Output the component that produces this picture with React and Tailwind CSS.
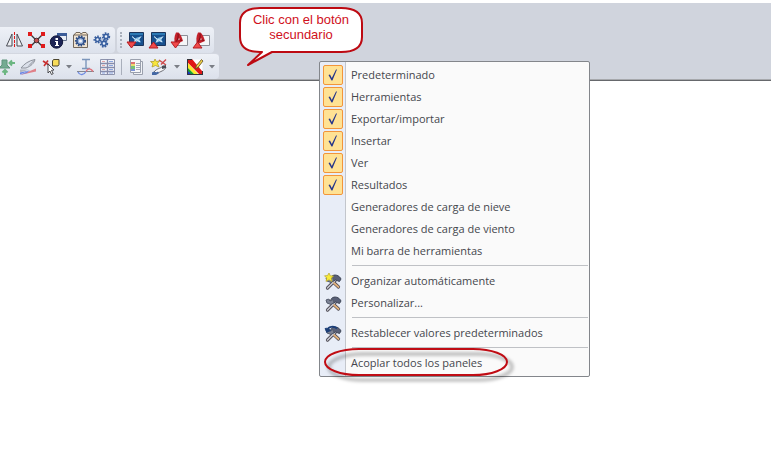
/**
 * Toolbar area with its context menu
 * Lists the toolbars that can be shown or hidden
 */

import { useState } from 'react';

const TOOLBARS = [
  { name: 'Predeterminado', visible: true },
  { name: 'Herramientas', visible: true },
  { name: 'Exportar/importar', visible: true },
  { name: 'Insertar', visible: true },
  { name: 'Ver', visible: true },
  { name: 'Resultados', visible: true },
  { name: 'Generadores de carga de nieve', visible: false },
  { name: 'Generadores de carga de viento', visible: false },
  { name: 'Mi barra de herramientas', visible: false },
];

function Icon({ children }) {
  return (
    <svg className="w-5 h-5 shrink-0" viewBox="0 0 20 20" fill="none" aria-hidden="true">
      {children}
    </svg>
  );
}

function MirrorIcon() {
  return (
    <Icon>
      <path d="M8 4v12H2.500z" fill="#eef0f4" stroke="#4a4d55" />
      <path d="M13 4v12h5.500z" fill="#eef0f4" stroke="#4a4d55" />
      <path d="M10.500 2v16" stroke="#e01818" strokeDasharray="3 1" />
    </Icon>
  );
}

function NodeIcon() {
  return (
    <Icon>
      <path d="M4 4l13 13M17 4L4 17" stroke="#3a3638" strokeWidth="1.400" />
      <circle cx="10.500" cy="10.500" r="2.300" fill="#c05050" stroke="#4a3033" />
      <path d="M2 2h4v4H2zM15 2h4v4h-4zM2 14h4v4H2zM15 14h4v4h-4z" fill="#e01b1b" />
    </Icon>
  );
}

function InfoIcon() {
  return (
    <Icon>
      <path d="M9.500 3.500h9v7h-9z" fill="#e9edf5" stroke="#66738c" />
      <path d="M9 3h10v3H9z" fill="#3c5c98" />
      <circle cx="8.500" cy="12" r="6.200" fill="#1c2456" stroke="#12183c" />
      <path d="M7.500 8h2.500v2H7.500zM7 11h3v4h1v1H7v-1h1v-3H7z" fill="#fff" />
    </Icon>
  );
}

function Gear({ x, y, r, color }) {
  return (
    <g>
      <circle cx={x} cy={y} r={r} stroke={color} strokeWidth="2" strokeDasharray="1.500 1.200" />
      <circle cx={x} cy={y} r={r - 1} fill="#9db6de" stroke={color} strokeWidth="1.500" />
      <circle cx={x} cy={y} r={r / 3} fill="#f3f5fa" />
    </g>
  );
}

function PanelGearIcon() {
  return (
    <Icon>
      <path d="M4 5l2-2.500h4l1 1.500 2-1.500h3l2 2.500" fill="#f7e6cb" stroke="#72665a" />
      <path d="M3.500 5h14v12.500h-14z" fill="#efe3d2" stroke="#72665a" />
      <Gear x={10.5} y={11} r={4.6} color="#2c4c86" />
    </Icon>
  );
}

function GearsIcon() {
  return (
    <Icon>
      <Gear x={5.5} y={9.5} r={3} color="#395f9f" />
      <Gear x={14} y={6.5} r={3.2} color="#395f9f" />
      <Gear x={12} y={13.5} r={3.2} color="#395f9f" />
    </Icon>
  );
}

function TransferIcon({ page, up }) {
  return (
    <Icon>
      {page ? (
        <>
          <path d="M7.500 5.500h11v10h-11z" fill="#f5f6f8" stroke="#8c8f98" />
          <path d="M7 2.500h2.500c2 1.500 3.500 5 4.500 8.500l-8 3.500c-1-4-1-8 1-12z" fill="#c3202a" />
          <path d="M7 12c2-3 2.500-5 2-8.500M8 9l5 1.500" stroke="#7c0d16" />
          <path d="M10 8l1 1.500-2 .5z" fill="#f1c4c6" />
        </>
      ) : (
        <>
          <path d="M4.500 2.500h14v13h-14z" fill="#17508e" stroke="#1b355c" />
          <path d="M5 3h13v2H5z" fill="#2c79b4" />
          <path d="M7 6.500l3 2 2-1 4-1-1.500 3 1.500 3-3.500-1-4 1.500 1-3.500z" fill="#86bfe6" />
          <path d="M7 6.500l3.500 3M16 6.500l-3 3M9.500 12l2-2.500 3.500 2.500" stroke="#e4f1fa" />
        </>
      )}
      {up ? (
        <path d="M6.500 12l4.500 6H2z" fill="#f04a4a" stroke="#b51c22" />
      ) : (
        <path d="M2 12h9l-4.500 6z" fill="#f04a4a" stroke="#b51c22" />
      )}
    </Icon>
  );
}

function SupportIcon() {
  return (
    <Icon>
      <path d="M6 3h5v5l3 3H3l3-3z" fill="#74ab92" stroke="#5f947d" />
      <path d="M19 6h-5m2-2.500L13.500 6 16 8.500M9 18v-4m-2.500 1.500L9 13l2.500 2.500" stroke="#6cb682" strokeWidth="2" />
    </Icon>
  );
}

function DeformIcon() {
  return (
    <Icon>
      <path d="M3 11c3-4 8-7.500 14-8.500-1 4-4 6.500-9 8.500z" fill="#dbe0ea" stroke="#8d929c" />
      <path d="M11 8.500l5-5" stroke="#8d929c" />
      <path d="M2 12.500h9l-9 3z" fill="#b4b7bf" />
      <path d="M2 17.500v-2l9-2z" fill="#6a86e6" />
      <path d="M2 18l16-3.500v-3z" fill="#e08089" />
      <path d="M2 18l8-4 2-1-3 3z" fill="#7288e0" />
    </Icon>
  );
}

function SelectIcon() {
  return (
    <Icon>
      <path d="M2 4l6 4M7 3.500L3 9" stroke="#c92f2f" strokeWidth="1.600" />
      <path d="M11.500 4l1-1.500h5.500v5L17 9h-5.500z" fill="#f7dc5a" stroke="#4c4630" />
      <path d="M7 7l6 6-2.500.3 1.700 3.400-1.700.8-1.600-3.500L7 16z" fill="#fff" stroke="#3a3a3e" strokeWidth=".9" />
    </Icon>
  );
}

function BeamIcon() {
  return (
    <Icon>
      <path d="M7 2.500h8M11 3v8M7 11.500h8" stroke="#7c96bb" strokeWidth="1.400" />
      <path d="M2 14.500h17" stroke="#85878f" />
      <path d="M3 15c2 4 6 3 8-.5" stroke="#6f8ce2" strokeWidth="1.400" />
      <path d="M11 14.500c2-4 5-3 7 0" stroke="#e0727b" strokeWidth="1.400" />
    </Icon>
  );
}

function TableIcon() {
  return (
    <Icon>
      <path d="M3.500 2.500h14v15h-14z" fill="#f1f3f9" stroke="#8d93ac" />
      <path d="M3 6.500h15M3 10.500h15M3 14.500h15M10.500 2v16" stroke="#868cab" strokeWidth="1.300" />
      <path d="M5 4.500h3M5 8.500h3M5 12.500h3" stroke="#e2a5a7" />
      <path d="M12 4.500h4M12 8.500h4M12 12.500h4M5 16h3M12 16h4" stroke="#8ba5df" />
    </Icon>
  );
}

function LegendIcon() {
  return (
    <Icon>
      <path d="M7.500 4.500h9v13h-9z" fill="#f2f4f8" stroke="#9aa0ad" />
      <path d="M4.500 2.500h10v13h-10z" fill="#f7f8fa" stroke="#9aa0ad" />
      <path d="M5 5h4v2H5z" fill="#dc7272" />
      <path d="M5 7h4v2H5z" fill="#ead96f" />
      <path d="M5 9h4v3H5z" fill="#76c07a" />
      <path d="M5 12h4v2H5z" fill="#7c93d8" />
      <path d="M10 6.500h4M10 8.500h4M10 10.500h4M10 12.500h4" stroke="#a3abb9" />
    </Icon>
  );
}

function WandIcon() {
  return (
    <Icon>
      <path d="M10 3l7 5M17 2.500l-5 5" stroke="#cf4a4c" strokeWidth="1.400" />
      <path d="M5 15c3-4 6-3 9-6l3 1c-1 4-6 4-9 7z" fill="#f7f7f9" stroke="#6a6c73" />
      <path d="M3 15.500c2-2 4 1 6-1l1 1.500-3 2H3z" fill="#4468a4" />
      <path d="M13 9l4-1v3l-4 1z" fill="#4b4e57" />
      <path d="M6 2l1.300 2.500 3.200-.5-2 2.500L10 10 6.500 8.500 3 10l1-3.300L1.500 4.500H5z" fill="#f8e63c" stroke="#a89525" strokeWidth=".7" />
    </Icon>
  );
}

function ColorMapIcon() {
  return (
    <Icon>
      <path d="M3.500 2.500h15v15h-15z" fill="#fff" />
      <path d="M3 2h5l10 12v4h-2L3 5z" fill="#e01616" />
      <path d="M3 5l12 13h-4L3 10z" fill="#ffe72a" />
      <path d="M3 10l8 8H7l-4-4z" fill="#18a428" />
      <path d="M3 13l5 5H3z" fill="#1633cc" />
      <path d="M11.500 11.500l1-3 5-6 1.500 1.500-5 6.500z" fill="#f1d345" stroke="#5c4a25" strokeWidth=".8" />
      <path d="M3.500 2v15.500H19M3 2.500h5M18.500 14v4" stroke="#33343a" />
    </Icon>
  );
}

function ToolsIcon({ star, reset }) {
  return (
    <Icon>
      <path d="M4.500 17l8-8M7 8l8.500 8" stroke="#4a4650" strokeWidth="3.200" strokeLinecap="round" />
      <path d="M4.500 17l8-8" stroke="#c9cbd4" strokeWidth="1.600" strokeLinecap="round" />
      <path d="M11 12l4.500 4" stroke="#e1b27d" strokeWidth="1.800" strokeLinecap="round" />
      <path d="M8.500 5.500c3-3 8-1 9.500 2.500l-1.500 2.500-4-1.500-3 1.500z" fill="#596077" stroke="#414859" />
      <path d="M3 7l2.500-1L7 8l3-1.500 1 3-3 2-4-1.500z" fill="#7b8295" stroke="#555c6d" />
      {star && (
        <path d="M6 2l1.300 2.800 3.200.2-2.300 2.300.8 3.200L6 8.800 3 10.500l.7-3.500L1.500 4.800l3-.2z" fill="#f8ea38" stroke="#b4a530" strokeWidth=".7" />
      )}
      {reset && <path d="M4 7.500c1-4 7-5 10-2M2.500 5l1.500 3.500L7.500 7" stroke="#1c3f78" strokeWidth="2" />}
    </Icon>
  );
}

function ToolButton({ label, wide, children }) {
  return (
    <button
      type="button"
      aria-label={label}
      className={`${wide ? 'w-6' : 'w-[22px]'} h-6 shrink-0 flex items-center justify-center rounded-sm hover:bg-amber-100`}
    >
      {children}
    </button>
  );
}

function ArrowButton({ label }) {
  return (
    <button type="button" aria-label={label} className="w-[11px] h-6 shrink-0 flex items-center justify-center">
      <svg className="w-[6px] h-[4px]" viewBox="0 0 6 4" aria-hidden="true">
        <path d="M0 0h6L3 3.500z" fill="#7b7e86" />
      </svg>
    </button>
  );
}

function ToolbarArea() {
  return (
    <header className="mt-[3px] pt-6 bg-[#d0d4dd] border-b border-[#66686c]">
      {/* First row */}
      <div className="flex gap-[2px]">
        <div className="flex items-center h-[26px] pl-[3px] pr-[2px] rounded-r-sm bg-linear-to-b from-[#eef1f7] to-[#dce1eb]">
          <ToolButton label="Simetría"><MirrorIcon /></ToolButton>
          <ToolButton label="Nudos"><NodeIcon /></ToolButton>
          <ToolButton label="Información"><InfoIcon /></ToolButton>
          <ToolButton label="Configuración"><PanelGearIcon /></ToolButton>
          <ToolButton label="Opciones"><GearsIcon /></ToolButton>
        </div>
        <div className="flex items-center h-[26px] pl-[3px] pr-[2px] rounded-sm bg-linear-to-b from-[#eef1f7] to-[#dce1eb]">
          <span className="h-4 mr-[2px] border-l-2 border-dotted border-[#a9afbb]" />
          <ToolButton label="Exportar modelo"><TransferIcon /></ToolButton>
          <ToolButton label="Importar modelo"><TransferIcon up /></ToolButton>
          <ToolButton label="Exportar documento"><TransferIcon page /></ToolButton>
          <ToolButton label="Importar documento"><TransferIcon page up /></ToolButton>
        </div>
      </div>

      {/* Second row */}
      <div className="flex border-b border-[#a6a8ac]">
        <div className="flex items-center h-[26px] pr-[2px] rounded-r-sm border-t border-[#d3d7e0] bg-linear-to-b from-[#eef1f7] to-[#dce1eb]">
          <div className="-ml-[5px] flex items-center">
            <ToolButton label="Apoyos"><SupportIcon /></ToolButton>
            <ToolButton label="Deformada"><DeformIcon /></ToolButton>
            <ToolButton label="Seleccionar" wide><SelectIcon /></ToolButton>
            <ArrowButton label="Más opciones de selección" />
            <ToolButton label="Esfuerzos"><BeamIcon /></ToolButton>
            <ToolButton label="Tablas"><TableIcon /></ToolButton>
            <span className="h-4 mx-[3px] border-l border-[#a9afbb]" />
            <ToolButton label="Leyenda"><LegendIcon /></ToolButton>
            <ToolButton label="Asistente" wide><WandIcon /></ToolButton>
            <ArrowButton label="Más asistentes" />
            <ToolButton label="Mapa de colores" wide><ColorMapIcon /></ToolButton>
            <ArrowButton label="Más mapas de colores" />
          </div>
        </div>
      </div>
    </header>
  );
}

function Callout() {
  return (
    <div className="absolute left-[238px] top-[6px] w-[126px] h-[62px] pt-[6px] text-center font-['Liberation_Sans',sans-serif] text-[13px] leading-[15px] text-[#d0101c]">
      <svg className="absolute inset-0 w-full h-full" viewBox="0 0 126 62" aria-hidden="true">
        <path
          d="M22 2h81q21 0 21 15v14q0 15-21 15H34L10 59l14-13h-2Q2 46 2 31V17Q2 2 22 2z"
          fill="#fff"
          stroke="#bd0a12"
          strokeWidth="2"
          strokeLinejoin="round"
        />
      </svg>
      <p className="relative">Clic con el botón<br />secundario</p>
    </div>
  );
}

function ToolbarOption({ name, checked, onToggle }) {
  return (
    <li>
      <label className="flex items-center h-[22px] pl-[3px]">
        <span className="grid w-5 h-5 mr-2 place-items-center">
          <input
            type="checkbox"
            checked={checked}
            onChange={onToggle}
            className="peer col-start-1 row-start-1 w-5 h-5 appearance-none rounded-xs checked:border checked:border-[#f2953a] checked:bg-[#ffe294]"
          />
          <svg className="hidden peer-checked:block col-start-1 row-start-1 w-3 h-3 pointer-events-none" viewBox="0 0 12 12" aria-hidden="true">
            <path d="M1.500 6l1.500-.5 1.800 3.500L9 .5h1L5.400 11.500h-.9z" fill="#26368a" />
          </svg>
        </span>
        {name}
      </label>
    </li>
  );
}

function MenuAction({ icon, children }) {
  return (
    <li>
      <button type="button" className="w-full h-[22px] pl-[3px] flex items-center text-left">
        <span className="w-5 h-5 mr-2">{icon}</span>
        {children}
      </button>
    </li>
  );
}

function Separator() {
  return (
    <li role="separator" className="h-2 pt-[3px] pl-8 pr-px">
      <div className="border-t border-[#bfc1c5]" />
    </li>
  );
}

function Highlight() {
  return (
    <svg className="absolute left-[3px] bottom-[-9px] w-[194px] h-[38px] pointer-events-none" viewBox="0 0 194 38" fill="none" aria-hidden="true">
      <defs>
        <filter id="soft" x="-10%" y="-20%" width="120%" height="150%">
          <feGaussianBlur stdDeviation="1.500" />
        </filter>
      </defs>
      <rect x="6" y="7" width="183" height="26" rx="34" ry="13" stroke="#000" strokeOpacity=".22" strokeWidth="4" filter="url(#soft)" />
      <rect x="2" y="2" width="182" height="26" rx="34" ry="13" stroke="#c00c14" strokeWidth="2" />
    </svg>
  );
}

function ContextMenu() {
  const [toolbars, setToolbars] = useState(TOOLBARS);

  const handleToggle = (name) => {
    setToolbars(toolbars.map((bar) => (bar.name === name ? { ...bar, visible: !bar.visible } : bar)));
  };

  return (
    <div className="absolute left-[319px] top-[61px] w-[271px] py-[2px] rounded-xs border border-[#83868b] bg-[linear-gradient(to_right,#e8edf7_25px,#c3c6cc_25px,#c3c6cc_26px,#fafafa_26px)] font-['Open_Sans',sans-serif] text-[11px] text-[#45474d]">
      <ul>
        {toolbars.map((bar) => (
          <ToolbarOption
            key={bar.name}
            name={bar.name}
            checked={bar.visible}
            onToggle={() => handleToggle(bar.name)}
          />
        ))}
        <Separator />
        <MenuAction icon={<ToolsIcon star />}>Organizar automáticamente</MenuAction>
        <MenuAction icon={<ToolsIcon />}>Personalizar...</MenuAction>
        <Separator />
        <MenuAction icon={<ToolsIcon reset />}>Restablecer valores predeterminados</MenuAction>
        <Separator />
        <MenuAction>Acoplar todos los paneles</MenuAction>
      </ul>
      <Highlight />
    </div>
  );
}

export default function App() {
  return (
    <main className="relative min-h-screen flow-root bg-white">
      <ToolbarArea />
      <Callout />
      <ContextMenu />
    </main>
  );
}
